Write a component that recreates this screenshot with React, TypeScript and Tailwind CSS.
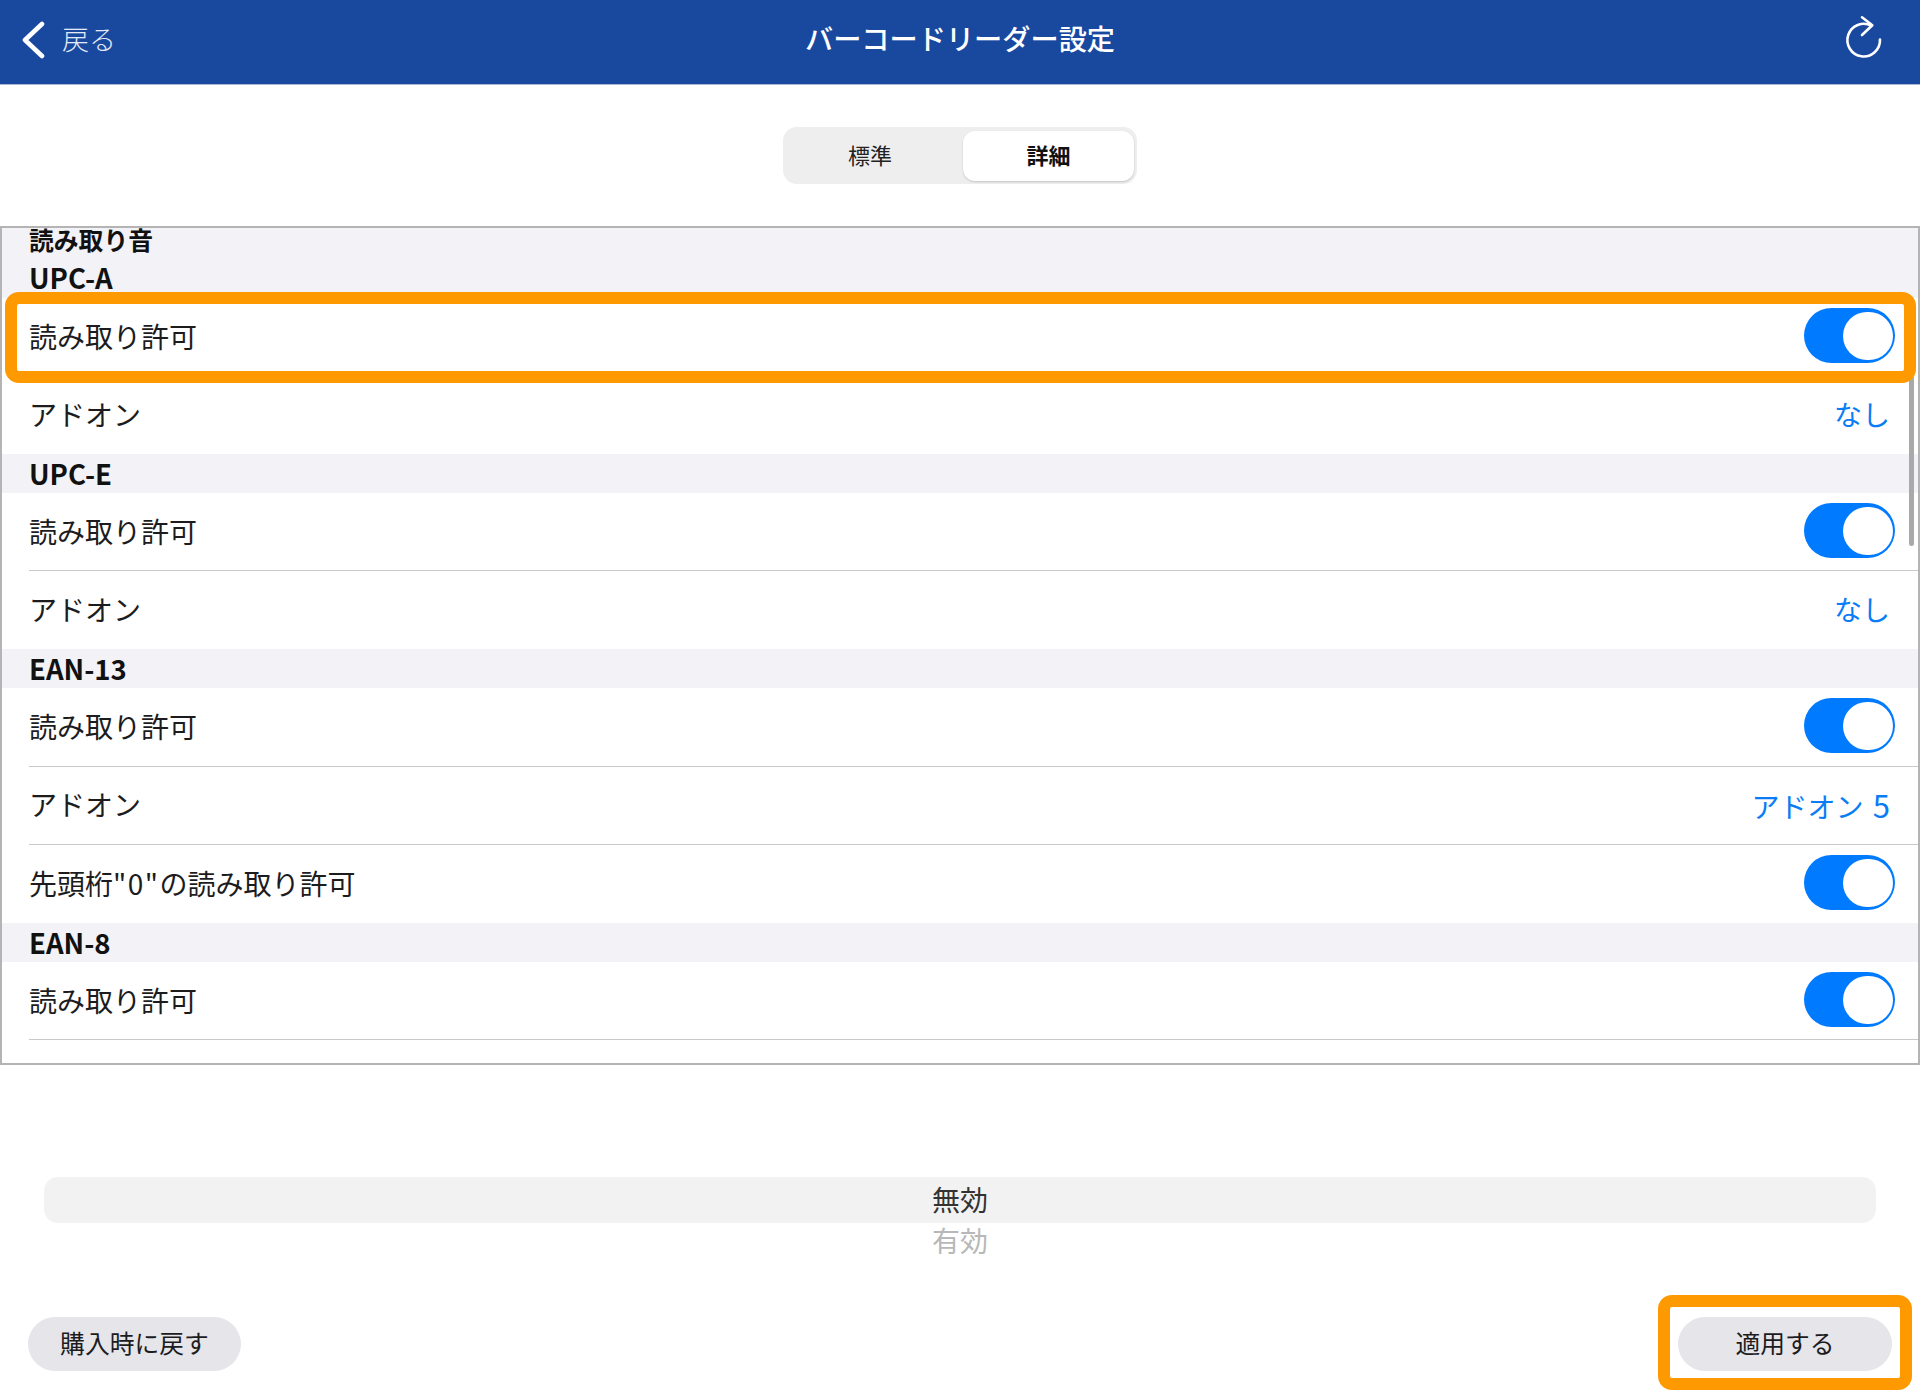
import React from "react";

function Toggle() {
  return (
    <div className="w-[91px] h-[55px] rounded-full bg-[#007aff] flex items-center justify-end pr-[2px] shrink-0">
      <div className="w-[50px] h-[48px] rounded-full bg-white" />
    </div>
  );
}

function Section({ label, cjk = false }: { label: string; cjk?: boolean }) {
  return (
    <div
      className={
        cjk
          ? "h-[39px] bg-[#f2f2f7] flex items-center pl-[27px] text-[24.8px] font-semibold text-[#111] leading-none"
          : "h-[39px] bg-[#f2f2f7] flex items-center pl-[27px] text-[27.5px] font-semibold text-[#111] leading-none"
      }
    >
      {label}
    </div>
  );
}

function Row({
  label,
  value,
  toggle,
  sep = true,
}: {
  label: React.ReactNode;
  value?: React.ReactNode;
  toggle?: boolean;
  sep?: boolean;
}) {
  return (
    <div
      className={
        sep
          ? "ml-[27px] h-[78.2px] flex items-center justify-between border-b-[1.5px] border-[#c9c9cb]"
          : "ml-[27px] h-[78.2px] flex items-center justify-between"
      }
    >
      <span className="text-[28px] font-normal text-[#1c1c1e] leading-none pb-[2px]">{label}</span>
      {toggle ? (
        <div className="pr-[23px] pb-[2px]">
          <Toggle />
        </div>
      ) : (
        <span className="text-[28px] font-normal text-[#0a7cf5] leading-none pr-[28px] pb-[2px]">{value}</span>
      )}
    </div>
  );
}

export default function App() {
  return (
    <div className="w-[1920px] h-[1400px] bg-white flex flex-col font-['Noto_Sans_CJK_JP','Liberation_Sans',sans-serif]">
      {/* Header */}
      <header className="h-[85px] shrink-0 bg-[#19499f] border-b border-[#aab6d2] pb-[5px] grid grid-cols-[1fr_auto_1fr] items-center text-white">
        <div className="flex items-center pl-[20px] gap-[14px]">
          <svg width="28" height="38" viewBox="0 0 28 38" fill="none" className="shrink-0">
            <path d="M22 3 L5 19 L22 35" stroke="#fff" strokeWidth="4.6" strokeLinecap="round" strokeLinejoin="round" />
          </svg>
          <span className="text-[27px] font-light text-[#e4e9f4] leading-none pb-[3px]">戻る</span>
        </div>
        <div className="text-[28.2px] font-medium leading-none pb-[3px]">バーコードリーダー設定</div>
        <div className="flex justify-end pr-[30px]">
          <svg width="50" height="60" viewBox="0 0 50 60" fill="none">
            <path
              d="M40 29.5 A16.3 16.3 0 1 1 31.5 15.8"
              stroke="#fff"
              strokeWidth="2.6"
              strokeLinecap="round"
            />
            <path d="M22 7.3 L32.3 15.3 L22 25" stroke="#fff" strokeWidth="2.6" strokeLinecap="round" strokeLinejoin="round" />
          </svg>
        </div>
      </header>

      {/* Segmented control */}
      <div className="flex justify-center mt-[42px] shrink-0">
        <div className="w-[354px] h-[57px] bg-[#eeeeef] rounded-[14px] flex items-center pl-[4px] pr-[3px] text-[22px] leading-none text-[#222]">
          <div className="w-[176px] text-center font-normal pr-[10px] pb-[3px]">標準</div>
          <div className="w-[171px] h-[50px] bg-white rounded-[12px] flex items-center justify-center font-semibold text-[#111] shadow-[0_1px_2px_rgba(0,0,0,0.18)] pb-[3px]">
            詳細
          </div>
        </div>
      </div>

      {/* List */}
      <div className="relative mt-[42px] h-[839px] shrink-0 border-2 border-[#b4b4b4] overflow-hidden">
        <div className="-mt-[8.4px]">
          <Section label="読み取り音" cjk />
          <Section label="UPC-A" />
          <div className="relative">
            <Row label="読み取り許可" toggle sep={false} />
            <div className="absolute left-[3px] right-[2px] -top-[5.6px] h-[91px] border-[12px] border-[#ff9900] rounded-[14px] z-10" />
          </div>
          <Row label="アドオン" value="なし" sep={false} />
          <Section label="UPC-E" />
          <Row label="読み取り許可" toggle />
          <Row label="アドオン" value="なし" sep={false} />
          <Section label="EAN-13" />
          <Row label="読み取り許可" toggle />
          <Row
            label="アドオン"
            value={
              <>
                アドオン <span className="text-[31px] ml-[3px]">5</span>
              </>
            }
          />
          <Row
            label={
              <>
                先頭桁<span className="tracking-[1.5px]">"0"</span>の読み取り許可
              </>
            }
            toggle
            sep={false}
          />
          <Section label="EAN-8" />
          <Row label="読み取り許可" toggle />
        </div>
        <div className="absolute top-[148px] right-[4px] w-[5px] h-[170px] rounded-full bg-[#a9a9a9]" />
      </div>

      {/* Picker */}
      <div className="mx-[44px] mt-[112px] shrink-0 text-[28px] font-normal leading-none text-center">
        <div className="h-[46px] bg-[#f2f2f2] rounded-[14px] flex items-center justify-center text-[#333] pb-[3px]">無効</div>
        <div className="h-[43px] flex items-center justify-center text-[#b8b8b8] pb-[9px]">有効</div>
      </div>

      {/* Bottom buttons */}
      <div className="flex justify-between px-[28px] mt-[51px] shrink-0">
        <button className="w-[213px] h-[54px] bg-[#e5e5ea] rounded-full text-[24.8px] font-normal text-[#1c1c1e] leading-none pb-[4px]">
          購入時に戻す
        </button>
        <div className="relative">
          <button className="w-[214px] h-[54px] bg-[#e5e5ea] rounded-full text-[24.8px] font-normal text-[#1c1c1e] leading-none pb-[4px]">
            適用する
          </button>
          <div className="absolute -left-[20px] -right-[20px] -top-[22px] -bottom-[19px] border-[12px] border-[#ff9900] rounded-[14px]" />
        </div>
      </div>
    </div>
  );
}
